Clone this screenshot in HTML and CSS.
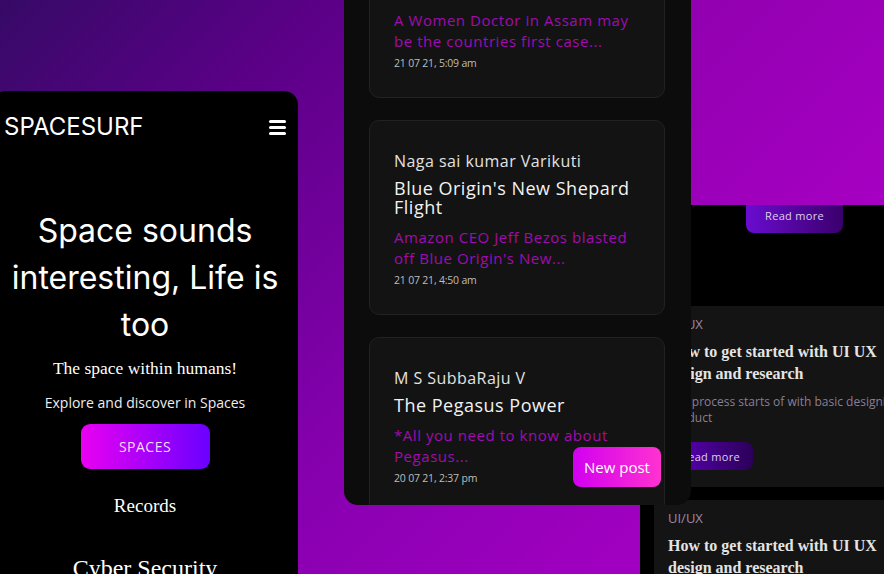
FILE: index.html
```html
<!DOCTYPE html>
<html lang="en">
<head>
<meta charset="utf-8">
<title>SpaceSurf</title>
<link rel="stylesheet" href="styles.css">
</head>
<body>
<div class="stage">
  <section class="phone phone-home">
    <header class="nav">
      <span class="logo">SPACESURF</span>
      <span class="burger"><i></i><i></i><i></i></span>
    </header>
    <h1 class="hero">Space sounds interesting, Life is too</h1>
    <p class="tagline">The space within humans!</p>
    <p class="explore">Explore and discover in Spaces</p>
    <a class="btn-spaces">SPACES</a>
    <p class="topic">Records</p>
    <p class="topic topic-lg">Cyber Security</p>
  </section>

  <section class="phone phone-blog">
    <div class="cover"></div>
    <a class="btn-read btn-cover">Read more</a>
    <article class="post">
      <p class="tag">UI/UX</p>
      <h3 class="post-title">How to get started with UI UX design and research</h3>
      <p class="post-desc">The process starts of with basic designing product</p>
      <a class="btn-read">Read more</a>
    </article>
    <article class="post post-next">
      <p class="tag">UI/UX</p>
      <h3 class="post-title">How to get started with UI UX design and research</h3>
      <p class="post-desc">The process starts of with basic designing product</p>
      <a class="btn-read">Read more</a>
    </article>
  </section>

  <section class="phone phone-feed">
    <article class="card">
      <p class="author">Ananya Sharma</p>
      <h2 class="title">First case of dual Covid infection</h2>
      <p class="excerpt">A Women Doctor in Assam may<br>be the countries first case...</p>
      <p class="date">21 07 21, 5:09 am</p>
    </article>
    <article class="card">
      <p class="author">Naga sai kumar Varikuti</p>
      <h2 class="title">Blue Origin's New Shepard<br>Flight</h2>
      <p class="excerpt">Amazon CEO Jeff Bezos blasted<br>off Blue Origin's New...</p>
      <p class="date">21 07 21, 4:50 am</p>
    </article>
    <article class="card">
      <p class="author">M S SubbaRaju V</p>
      <h2 class="title">The Pegasus Power</h2>
      <p class="excerpt">*All you need to know about<br>Pegasus...</p>
      <p class="date">20 07 21, 2:37 pm</p>
    </article>
    <button class="new-post">New post</button>
  </section>
</div>
</body>
</html>
```

FILE: styles.css
```css
* { box-sizing: border-box; }

html, body {
  margin: 0;
  padding: 0;
}

body {
  width: 884px;
  height: 574px;
  overflow: hidden;
  background: linear-gradient(135deg, #360a66 0%, #5c0088 23%, #8800b0 55%, #a000c0 80%, #aa00c8 100%);
  font-family: "Open Sans", "Noto Sans", sans-serif;
}

.stage {
  position: relative;
  width: 884px;
  height: 574px;
  overflow: hidden;
}

p, h1, h2, h3 { margin: 0; font-weight: 400; }

.phone {
  position: absolute;
  overflow: hidden;
}

/* ---------- left phone ---------- */
.phone-home {
  left: -8px;
  top: 91px;
  width: 306px;
  height: 520px;
  background: #000;
  border-radius: 14px;
  color: #fff;
  text-align: center;
}

.nav {
  display: flex;
  justify-content: space-between;
  align-items: center;
  height: 72px;
  padding: 0 12px;
}

.logo {
  font-family: Inter, "DejaVu Sans", sans-serif;
  font-size: 24px;
  letter-spacing: 0;
  line-height: 1;
}

.burger {
  display: flex;
  flex-direction: column;
  gap: 3px;
  width: 17px;
}

.burger i {
  display: block;
  height: 3px;
  background: #fff;
  border-radius: 2px;
}

.hero {
  margin: 44px 8px 0;
  font-family: Inter, "DejaVu Sans", sans-serif;
  font-size: 32px;
  line-height: 47px;
  font-weight: 400;
}

.tagline {
  margin-top: 8px;
  font-family: "Liberation Serif", serif;
  font-size: 17.5px;
  line-height: 24px;
}

.explore {
  margin-top: 13px;
  font-size: 14px;
  line-height: 20px;
  color: #eee;
}

.btn-spaces {
  display: flex;
  align-items: center;
  justify-content: center;
  width: 129px;
  height: 45px;
  margin: 11px auto 0;
  border-radius: 9px;
  background: linear-gradient(90deg, #ea00f2, #6a00ff);
  color: #f4dcff;
  font-size: 14px;
  letter-spacing: 0.5px;
}

.topic {
  margin-top: 25px;
  font-family: "Liberation Serif", serif;
  font-size: 19px;
  line-height: 24px;
}

.topic-lg {
  margin-top: 36px;
  font-size: 24px;
  line-height: 28px;
}

/* ---------- right phone (blog) ---------- */
.phone-blog {
  left: 640px;
  top: -200px;
  width: 309px;
  height: 800px;
  background: #000;
}

.cover {
  height: 405px;
  background: linear-gradient(135deg, #8400a4, #aa00c6);
}

.btn-read {
  display: flex;
  align-items: center;
  justify-content: center;
  width: 85px;
  height: 28px;
  border-radius: 8px;
  background: linear-gradient(90deg, #5c00bc, #2c0058);
  color: #ddd0ea;
  font-size: 11px;
  letter-spacing: 0.3px;
}

.btn-cover {
  width: 97px;
  margin: 0 auto;
  padding-bottom: 8px;
  border-radius: 0 0 8px 8px;
  background: linear-gradient(90deg, #6a0cd0, #3a006c);
}

.post {
  margin: 73px 14px 0;
  padding: 10px 14px 17px;
  background: #141414;
}

.post-next { margin-top: 13px; }

.tag {
  font-size: 13px;
  line-height: 16px;
  color: #9a8aa8;
}

.post-title {
  margin-top: 9px;
  font-family: "Liberation Serif", serif;
  font-size: 16px;
  line-height: 22px;
  font-weight: 700;
  color: #e4e4e4;
}

.post-desc {
  margin-top: 9px;
  font-size: 12px;
  line-height: 16px;
  color: #8a7e96;
}

.post .btn-read { margin-top: 16px; }

/* ---------- middle phone (feed) ---------- */
.phone-feed {
  left: 344px;
  top: -120px;
  width: 347px;
  height: 625px;
  padding: 23px 26px 0 25px;
  background: #0c0c0c;
  border-radius: 14px;
  display: flex;
  flex-direction: column;
  gap: 22px;
}

.card {
  flex-shrink: 0;
  padding: 30px 20px 27px 24px;
  background: #131313;
  border: 1px solid #222;
  border-radius: 10px;
}

.author {
  font-size: 16px;
  line-height: 20px;
  letter-spacing: 0.45px;
  color: #e2e2e2;
}

.title {
  margin-top: 7.5px;
  font-size: 18px;
  line-height: 19px;
  letter-spacing: 0.5px;
  color: #f2f2f2;
}

.excerpt {
  margin-top: 10px;
  font-size: 15px;
  line-height: 21px;
  letter-spacing: 0.55px;
  color: #a00cb0;
}

.date {
  margin-top: 4.5px;
  font-size: 10.5px;
  line-height: 14px;
  letter-spacing: -0.2px;
  color: #bdbdbd;
}

.new-post {
  position: absolute;
  right: 30px;
  bottom: 18px;
  width: 88px;
  height: 40px;
  border: none;
  border-radius: 8px;
  background: linear-gradient(90deg, #d200f0, #ff32d0);
  color: #fff;
  font-family: "Open Sans", "Noto Sans", sans-serif;
  font-size: 15px;
}
```
